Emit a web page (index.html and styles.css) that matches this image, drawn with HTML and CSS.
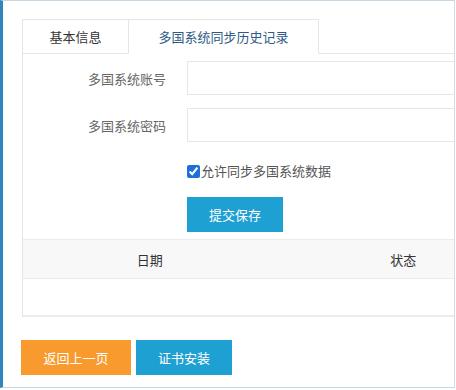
FILE: index.html
```html
<!DOCTYPE html>
<html lang="zh-CN">
  <head>
    <meta charset="UTF-8" />
    <meta name="viewport" content="width=device-width, initial-scale=1.0" />
    <title>多国系统同步</title>
    <link rel="stylesheet" href="styles.css">
  </head>
  <body>
    <div class="frame">
      <div class="inner">
        <!-- Tabs -->
        <ul class="tabs">
          <li class="tab">基本信息</li>
          <li class="tab active">多国系统同步历史记录</li>
          <li class="tab-fill"></li>
        </ul>

        <div class="panel">
          <form class="form">
            <div class="row">
              <label class="label">多国系统账号</label>
              <input class="input" type="text" />
            </div>
            <div class="row">
              <label class="label">多国系统密码</label>
              <input class="input" type="password" />
            </div>
            <div class="row check-row">
              <label class="check"><input type="checkbox" checked />允许同步多国系统数据</label>
            </div>
            <div class="row btn-row">
              <button type="button" class="btn btn-blue save">提交保存</button>
            </div>
          </form>

          <table class="history">
            <thead>
              <tr>
                <th>日期</th>
                <th>状态</th>
              </tr>
            </thead>
            <tbody>
              <tr>
                <td></td>
                <td></td>
              </tr>
            </tbody>
          </table>
        </div>

        <div class="actions">
          <button type="button" class="btn btn-orange back">返回上一页</button>
          <button type="button" class="btn btn-blue cert">证书安装</button>
        </div>
      </div>
    </div>
  </body>
</html>
```

FILE: styles.css
```css
* {
  margin: 0;
  padding: 0;
  box-sizing: border-box;
}

body {
  font-family: "Noto Sans CJK SC", "Noto Sans", sans-serif;
  font-size: 13px;
  color: #333;
  background: #fff;
}

.frame {
  width: 455px;
  height: 388px;
  border-top: 1px solid #c7d8e2;
  border-left: 3px solid #2f86bd;
  border-right: 1px solid #cfdde6;
  border-bottom: 1px solid #c7d8e2;
  overflow: hidden;
}

.inner {
  width: 560px;
  padding: 18px 0 0 19px;
}

/* Tabs */
.tabs {
  list-style: none;
  display: flex;
  height: 35px;
}

.tab {
  height: 35px;
  line-height: 33px;
  border: 1px solid #e6e6e6;
  text-align: center;
  color: #333;
  background: #fff;
}

.tab:first-child {
  width: 107px;
}

.tab.active {
  width: 190px;
  border-left: none;
  border-bottom-color: #fff;
  color: #2e5a86;
}

.tab-fill {
  flex: 1;
  border-bottom: 1px solid #e6e6e6;
}

/* Form */
.panel {
  width: 508px;
  border-left: 1px solid #e6e6e6;
}

.form {
  padding-top: 7px;
  padding-bottom: 7px;
}

.row {
  display: flex;
  align-items: center;
  margin-bottom: 13px;
}

.label {
  width: 164px;
  padding-right: 21px;
  text-align: right;
  color: #666;
}

.input {
  width: 320px;
  height: 34px;
  border: 1px solid #e6e6e6;
  outline: none;
}

.check-row {
  padding-left: 164px;
  margin-top: 20px;
  margin-bottom: 17px;
}

.check {
  display: flex;
  align-items: center;
  color: #555;
  line-height: 18px;
}

.check input {
  width: 13px;
  height: 13px;
  margin: 0 1px 0 0;
  accent-color: #1e6fd9;
}

.btn-row {
  padding-left: 164px;
  margin-bottom: 0;
}

.btn {
  border: none;
  height: 35px;
  color: #fff;
  font-family: inherit;
  font-size: 13px;
  cursor: pointer;
}

.btn-blue {
  background: #1fa0d3;
}

.btn-orange {
  background: #f89a2e;
}

.save {
  width: 96px;
}

/* Table */
.history {
  width: 507px;
  border-collapse: collapse;
  border-bottom: 2px solid #ebebeb;
}

.history th {
  height: 39px;
  font-weight: normal;
  background: #f8f8f8;
  border-top: 1px solid #ebebeb;
  border-bottom: 1px solid #ebebeb;
  text-align: center;
  width: 50%;
}

.history td {
  height: 37px;
}

/* Bottom buttons */
.actions {
  display: flex;
  gap: 5px;
  margin: 23px 0 0 -1px;
}

.back {
  width: 110px;
}

.cert {
  width: 96px;
}
```
